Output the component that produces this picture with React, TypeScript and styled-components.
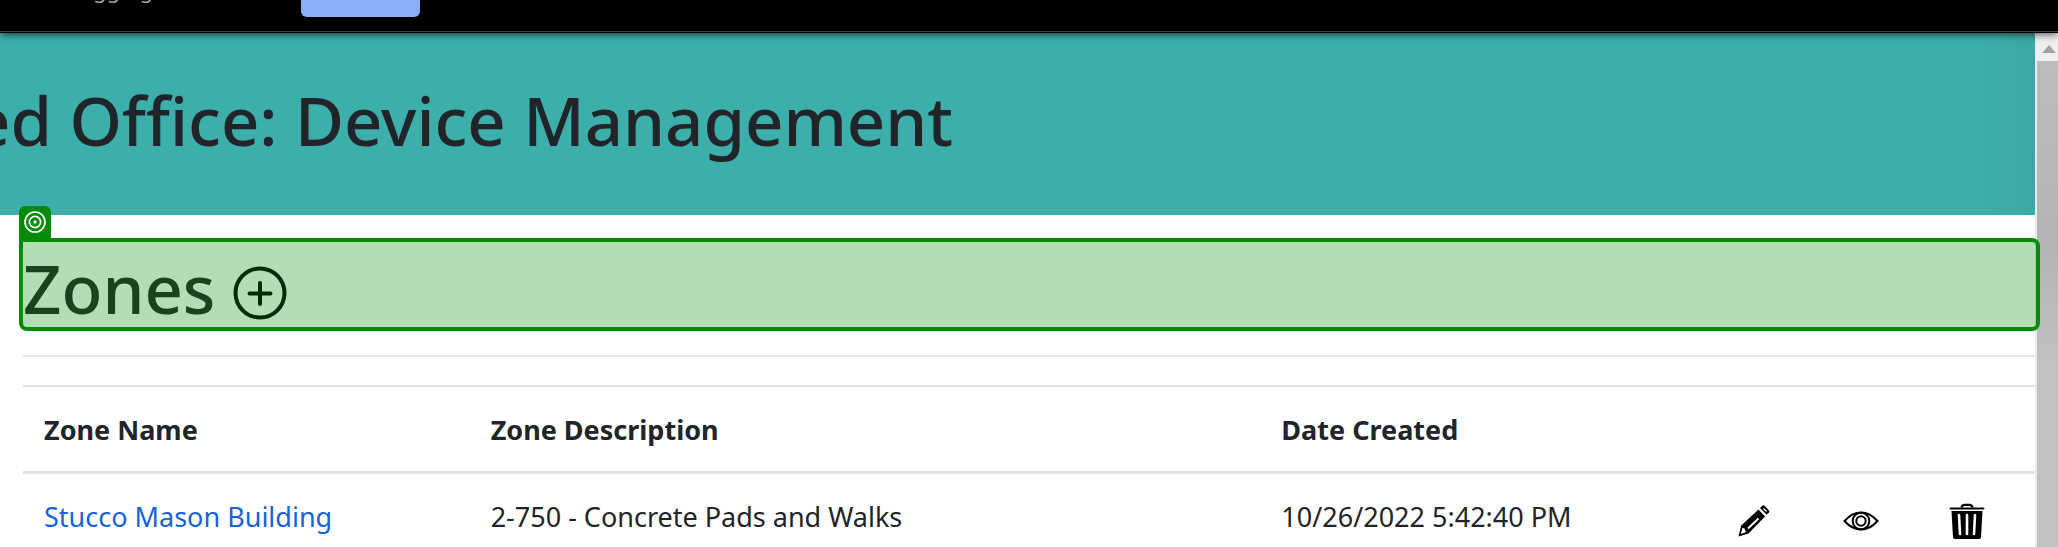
import React from "react";
import styled, { createGlobalStyle } from "styled-components";

const Global = createGlobalStyle`
  *, *::before, *::after { box-sizing: border-box; }
  body { margin: 0; background: #fff; overflow: hidden; font-family: "Noto Sans", "Open Sans", sans-serif; color: #212529; }
`;

const Screen = styled.div`
  height: 100vh;
  display: flex;
  flex-direction: column;
  overflow: hidden;
`;

const TopBar = styled.header`
  position: relative;
  z-index: 3;
  flex: none;
  display: flex;
  align-items: flex-end;
  height: 33px;
  padding-left: 40px;
  background: #000;
  border-bottom: 1px solid #000;
  box-shadow: inset 0 -1px 0 #444, 0 1px 8px rgba(0, 0, 0, 0.7);
`;

const Status = styled.span`
  flex: 0 0 261px;
  padding-bottom: 31px;
  font-size: 22px;
  line-height: 24px;
  white-space: nowrap;
  color: #9aa0a6;
`;

const PrimaryButton = styled.button`
  width: 119px;
  height: 48px;
  margin-bottom: 15px;
  border: 0;
  border-radius: 6px;
  background: #8ab1f8;
`;

const Viewport = styled.div`
  flex: 1;
  display: flex;
  min-height: 0;
`;

const Page = styled.main`
  flex: 1;
  min-width: 0;
`;

const Banner = styled.div`
  height: 182px;
  padding-top: 45px;
  overflow: hidden;
  background: linear-gradient(to right, #3cafab calc(100% - 60px), #3aa9a4);
`;

const Title = styled.h1`
  display: flex;
  justify-content: flex-end;
  width: 953px;
  margin: 0;
  white-space: nowrap;
  font-size: 67px;
  line-height: 84px;
  font-weight: 500;
  font-variant-ligatures: none;
`;

const Content = styled.section`
  padding: 26px 0 0 23px;
`;

const ZoneHeading = styled.div`
  position: relative;
  display: flex;
  align-items: flex-end;
  gap: 18px;
  height: 87px;
`;

const Heading = styled.h2`
  margin: 0;
  font-size: 67px;
  line-height: 80px;
  font-weight: 500;
`;

const IconButton = styled.button`
  display: inline-flex;
  padding: 0;
  border: 0;
  background: none;
  color: #000;
`;

const AddButton = styled(IconButton)`
  margin-bottom: 8px;
`;

const Highlight = styled.div`
  position: absolute;
  inset: -3px -5px -3px -4px;
  z-index: 2;
  border: 4px solid #048c08;
  border-radius: 8px;
  border-top-left-radius: 0;
  background: rgba(5, 140, 10, 0.3);
  pointer-events: none;
`;

const TargetTab = styled.span`
  position: absolute;
  left: -4px;
  bottom: 100%;
  display: flex;
  justify-content: center;
  width: 32px;
  height: 36px;
  padding-top: 4px;
  border-radius: 6px 6px 0 0;
  background: #048c08;
`;

const Rule = styled.hr`
  height: 2px;
  margin: 27px 0 28px;
  border: 0;
  background: #e6e7e8;
`;

const Table = styled.table`
  width: 100%;
  table-layout: fixed;
  border-collapse: collapse;
  font-size: 27px;
  line-height: 42px;
  border-top: 2px solid #dee2e6;
`;

const HeadCell = styled.th`
  padding: 22px 21px 20px;
  text-align: left;
  font-weight: 700;
  border-bottom: 3px solid #dee2e6;
`;

const Cell = styled.td`
  padding: 22px 21px;
  white-space: nowrap;
`;

const ActionCell = styled(Cell)`
  padding: 29px 0 0 23px;
  line-height: 0;
  vertical-align: top;
`;

const Link = styled.a`
  color: #1763d6;
  text-decoration: none;
`;

const Scrollbar = styled.div`
  flex: 0 0 23px;
  display: flex;
  flex-direction: column;
  border-left: 2px solid #ededee;
  background: #f1f1f1;
`;

const ScrollUp = styled.button`
  display: flex;
  align-items: center;
  justify-content: center;
  height: 28px;
  padding: 3px 0 0 3px;
  border: 0;
  background: #efefef;
`;

const Thumb = styled.div`
  flex: 1;
  background: linear-gradient(to bottom, rgba(0, 0, 0, 0.02), rgba(0, 0, 0, 0.07) 180px, transparent 300px) #c1c1c1;
`;

const PlusIcon = () => (
  <svg width="54" height="54" viewBox="0 0 54 54" fill="none" stroke="currentColor" strokeWidth="4" strokeLinecap="round" aria-hidden="true">
    <circle cx="27" cy="27" r="24.5" />
    <path d="M27 17v21M16.500 27.500h21" />
  </svg>
);

const TargetIcon = () => (
  <svg width="24" height="24" viewBox="0 0 24 24" fill="none" stroke="#fff" strokeWidth="1.7" aria-hidden="true">
    <circle cx="12" cy="12" r="10" />
    <circle cx="12" cy="12" r="5.6" />
    <circle cx="12" cy="12" r="1.7" fill="#fff" stroke="none" />
  </svg>
);

const PencilIcon = () => (
  <svg width="36" height="36" viewBox="0 0 36 36" aria-hidden="true">
    <path d="M2.500 33.500 5.200 22.500 22.500 6.500 29 13.500 12.500 30.500Z" fill="#000" />
    <path d="M4.800 31 6.500 24.800 8.500 25.500 9.500 28.300 10.500 29Z" fill="#fff" />
    <path d="M12 25.500 22.500 15.500" stroke="#fff" strokeWidth="1.800" />
    <path d="M24 5 26.500 2.600Q27.500 1.800 28.500 2.800L33 7.500Q33.800 8.500 33 9.500L30.700 11.800Z" fill="#000" />
    <path d="M27.500 5.500 30.500 8.500" stroke="#fff" strokeWidth="1.200" />
  </svg>
);

const EyeIcon = () => (
  <svg width="36" height="36" viewBox="0 0 36 36" fill="none" stroke="#000" strokeWidth="2" aria-hidden="true">
    <path d="M1.500 18Q9 9.500 18 9.500T34.500 18Q27 26.500 18 26.500T1.500 18Z" />
    <circle cx="18" cy="18" r="8.300" />
    <circle cx="18" cy="18" r="4.700" />
  </svg>
);

const TrashIcon = () => (
  <svg width="36" height="36" viewBox="0 0 36 36" aria-hidden="true">
    <path d="M12.500 4.500Q13 1.800 15.500 1.800H20.500Q23 1.800 23.500 4.500" fill="none" stroke="#000" strokeWidth="2.200" />
    <path d="M2 4.500H34Q35.500 4.500 35.500 5.500T34 6.500H2Q.5 6.500 .5 5.500T2 4.500Z" />
    <path d="M2.500 8H33.500L32 34Q32 36 30 36H6Q4 36 4 34Z" />
    <path d="M10 12 11 31M18 12V31M26 12 25 31" stroke="#fff" strokeWidth="2.600" strokeLinecap="round" />
  </svg>
);

export default function App() {
  return (
    <Screen>
      <Global />
      <TopBar>
        <Status>debugging this browser</Status>
        <PrimaryButton aria-label="Cancel" />
      </TopBar>
      <Viewport>
        <Page>
          <Banner>
            <Title>ed Office: Device Management</Title>
          </Banner>
          <Content>
            <ZoneHeading>
              <Heading>Zones</Heading>
              <AddButton aria-label="Add zone">
                <PlusIcon />
              </AddButton>
              <Highlight>
                <TargetTab>
                  <TargetIcon />
                </TargetTab>
              </Highlight>
            </ZoneHeading>
            <Rule />
            <Table>
              <colgroup>
                <col style={{ width: "22.2%" }} />
                <col style={{ width: "39.3%" }} />
                <col style={{ width: "22.5%" }} />
                <col style={{ width: "5.3%" }} />
                <col style={{ width: "5.3%" }} />
                <col />
              </colgroup>
              <thead>
                <tr>
                  <HeadCell scope="col">Zone Name</HeadCell>
                  <HeadCell scope="col">Zone Description</HeadCell>
                  <HeadCell scope="col">Date Created</HeadCell>
                  <HeadCell as="td" colSpan={3} />
                </tr>
              </thead>
              <tbody>
                <tr>
                  <Cell>
                    <Link href="#zone">Stucco Mason Building</Link>
                  </Cell>
                  <Cell>2-750 - Concrete Pads and Walks</Cell>
                  <Cell>10/26/2022 5:42:40 PM</Cell>
                  <ActionCell>
                    <IconButton aria-label="Edit"><PencilIcon /></IconButton>
                  </ActionCell>
                  <ActionCell>
                    <IconButton aria-label="View"><EyeIcon /></IconButton>
                  </ActionCell>
                  <ActionCell>
                    <IconButton aria-label="Delete"><TrashIcon /></IconButton>
                  </ActionCell>
                </tr>
              </tbody>
            </Table>
          </Content>
        </Page>
        <Scrollbar>
          <ScrollUp aria-label="Scroll up">
            <svg width="14" height="8" viewBox="0 0 14 8" aria-hidden="true"><path d="M7 0 14 8H0Z" fill="#a3a3a3" /></svg>
          </ScrollUp>
          <Thumb />
        </Scrollbar>
      </Viewport>
    </Screen>
  );
}
